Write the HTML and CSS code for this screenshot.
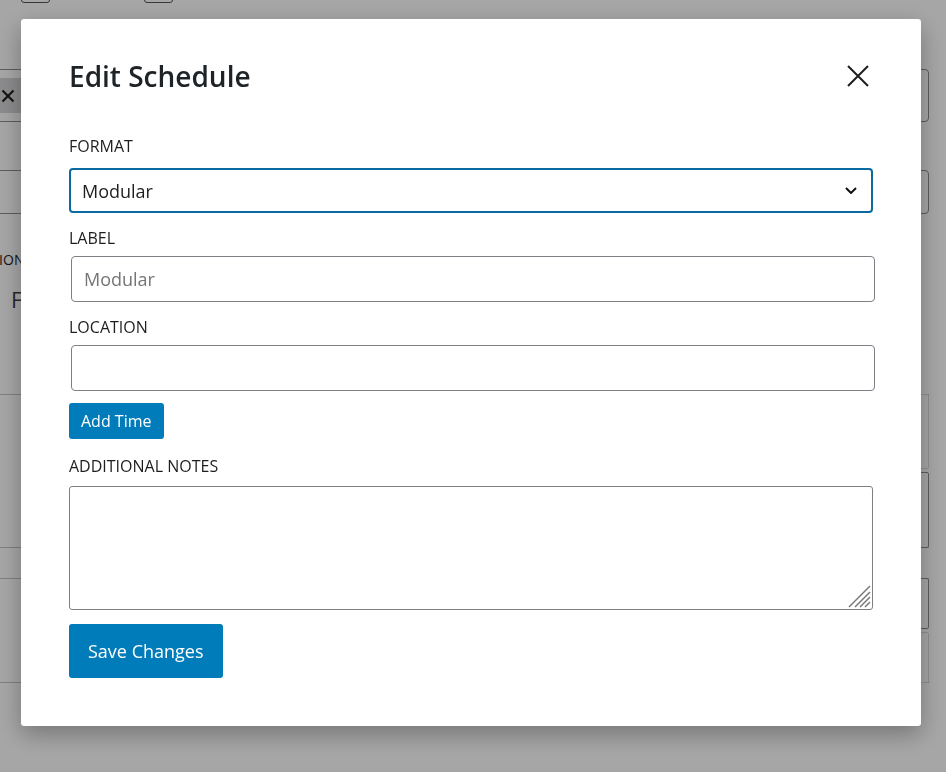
FILE: index.html
```html
<!DOCTYPE html>
<html lang="en">
<head>
<meta charset="utf-8">
<title>Edit Schedule</title>
<link rel="stylesheet" href="styles.css">
</head>
<body>
<div class="page">
  <div class="toolbar">
    <span class="tb-btn"></span>
    <span class="tb-btn"></span>
  </div>
  <div class="bg-row row-a">
    <span class="bg-x" aria-label="Remove">
      <svg width="14" height="14" viewBox="0 0 14 14"><path d="M1.5 1.5 L12.5 12.5 M12.5 1.5 L1.5 12.5" stroke="#1e1e1e" stroke-width="2.2" fill="none"/></svg>
    </span>
  </div>
  <div class="bg-row row-b"></div>
  <div class="bg-heading">DESCRIPTION</div>
  <div class="bg-sub">Format</div>
  <div class="bg-group g1">
    <div class="cells">
      <div class="cell light c1"></div>
      <div class="cell c2"></div>
    </div>
  </div>
  <div class="bg-group g2">
    <div class="cells">
      <div class="cell c3"></div>
      <div class="cell light c4"></div>
    </div>
  </div>
</div>

<div class="overlay"></div>

<div class="modal" role="dialog" aria-labelledby="modal-title">
  <div class="modal-header">
    <h1 id="modal-title" class="modal-title">Edit Schedule</h1>
    <button class="close" aria-label="Close">
      <svg width="22" height="22" viewBox="0 0 22 22"><path d="M1 1 L21 21 M21 1 L1 21" stroke="#1e1e1e" stroke-width="2" fill="none"/></svg>
    </button>
  </div>

  <label class="label label-format">Format</label>
  <div class="select" role="combobox">
    <span>Modular</span>
    <svg class="chev" width="12" height="7" viewBox="0 0 12 7"><path d="M1 1 L6 6 L11 1" stroke="#111" stroke-width="2" fill="none"/></svg>
  </div>

  <label class="label label-next">Label</label>
  <input class="input" type="text" placeholder="Modular">

  <label class="label label-next">Location</label>
  <input class="input" type="text">

  <button class="btn btn-small">Add Time</button>

  <label class="label label-notes">Additional Notes</label>
  <div class="textarea-wrap">
    <textarea class="textarea"></textarea>
    <svg class="grip" width="23" height="23" viewBox="0 0 23 23"><path d="M1 22 L22 1 M7 22 L22 7 M12 22 L22 12 M17 22 L22 17" stroke="#7a7a7a" stroke-width="1.5" fill="none"/></svg>
  </div>

  <button class="btn btn-large">Save Changes</button>
</div>
</body>
</html>
```

FILE: styles.css
```css
* { box-sizing: border-box; }

html, body {
  margin: 0;
  padding: 0;
  background: #fff;
  font-family: "Open Sans", "Noto Sans", sans-serif;
  color: #1e1e1e;
  overflow: hidden;
}

/* background page */
.page {
  width: 929px;
  height: 772px;
}
.toolbar {
  height: 3px;
  display: flex;
  gap: 94px;
  padding-left: 21px;
}
.tb-btn {
  width: 29px;
  height: 30px;
  margin-top: -27px;
  border: 1px solid #50575e;
  border-radius: 3px;
}
.bg-row {
  margin-left: -20px;
  border: 1px solid #8c8f94;
  border-radius: 4px;
}
.row-a {
  margin-top: 66px;
  height: 53px;
  padding-top: 8px;
  padding-left: 10px;
}
.bg-x {
  display: flex;
  align-items: center;
  justify-content: center;
  width: 34px;
  height: 35px;
  background: #d6d6d8;
}
.row-b {
  margin-top: 48px;
  height: 44px;
}
.bg-heading {
  margin-top: 35px;
  margin-left: -64px;
  font-size: 14px;
  line-height: 22px;
  color: #1d2327;
}
.bg-sub {
  margin-top: 14px;
  margin-left: 11px;
  font-size: 22px;
  line-height: 28px;
  color: #3a3f45;
}
.bg-group {
  display: flex;
  justify-content: flex-end;
  margin-left: -20px;
  border-top: 1px solid #c3c4c7;
  border-bottom: 1px solid #c3c4c7;
}
.g1 { margin-top: 81px; }
.g2 { margin-top: 30px; }
.cells {
  display: flex;
  flex-direction: column;
  gap: 3px;
  width: 130px;
  margin-top: -1px;
  margin-bottom: -1px;
}
.cell {
  border: 1px solid #8c8f94;
  border-radius: 2px;
}
.cell.light { border-color: #dcdcde; }
.c1 { height: 75px; }
.c2 { height: 76px; }
.c3 { height: 51px; }
.c4 { height: 51px; }

.overlay {
  position: fixed;
  inset: 0;
  background: rgba(0, 0, 0, 0.35);
}

/* modal */
.modal {
  position: fixed;
  left: 21px;
  top: 19px;
  width: 900px;
  padding: 39px 48px 48px 48px;
  background: #fff;
  border-radius: 3px;
  box-shadow: 0 8px 24px rgba(0, 0, 0, 0.3);
}
.modal-header {
  display: flex;
  align-items: center;
  justify-content: space-between;
  height: 36px;
}
.modal-title {
  margin: 0;
  font-size: 28px;
  line-height: 36px;
  font-weight: 600;
  color: #1d2327;
}
.close {
  display: flex;
  width: 22px;
  height: 22px;
  margin-right: 4px;
  padding: 0;
  border: 0;
  background: none;
}

.label {
  display: block;
  font-size: 16px;
  line-height: 24px;
  color: #1e1e1e;
  text-transform: uppercase;
}
.label-format { margin: 40px 0 10px; }
.label-next { margin: 13px 0 6px; }
.label-notes { margin: 15px 0 8px; }

.select {
  display: flex;
  align-items: center;
  justify-content: space-between;
  height: 45px;
  padding: 0 14px 0 11px;
  border: 2px solid #0a6aa1;
  border-radius: 4px;
  font-size: 18px;
  color: #1e1e1e;
}

.input {
  display: block;
  width: 100%;
  height: 46px;
  margin: 0 0 0 2px;
  padding: 0 12px;
  border: 1px solid #7e8086;
  border-radius: 4px;
  font-family: inherit;
  font-size: 18px;
  color: #1e1e1e;
  background: #fff;
}
.input::placeholder { color: #757575; }

.btn {
  display: block;
  border: 0;
  border-radius: 3px;
  background: #007cba;
  color: #fff;
  font-family: inherit;
}
.btn-small {
  margin-top: 12px;
  height: 36px;
  padding: 0 12px;
  font-size: 16px;
}
.btn-large {
  margin-top: 14px;
  height: 54px;
  padding: 0 19px;
  font-size: 18px;
}

.textarea-wrap {
  position: relative;
}
.textarea {
  display: block;
  width: 100%;
  height: 124px;
  margin: 0;
  border: 1px solid #7e8086;
  border-radius: 3px;
  resize: none;
  font-family: inherit;
  font-size: 16px;
}
.grip {
  position: absolute;
  right: 2px;
  bottom: 2px;
}
```
